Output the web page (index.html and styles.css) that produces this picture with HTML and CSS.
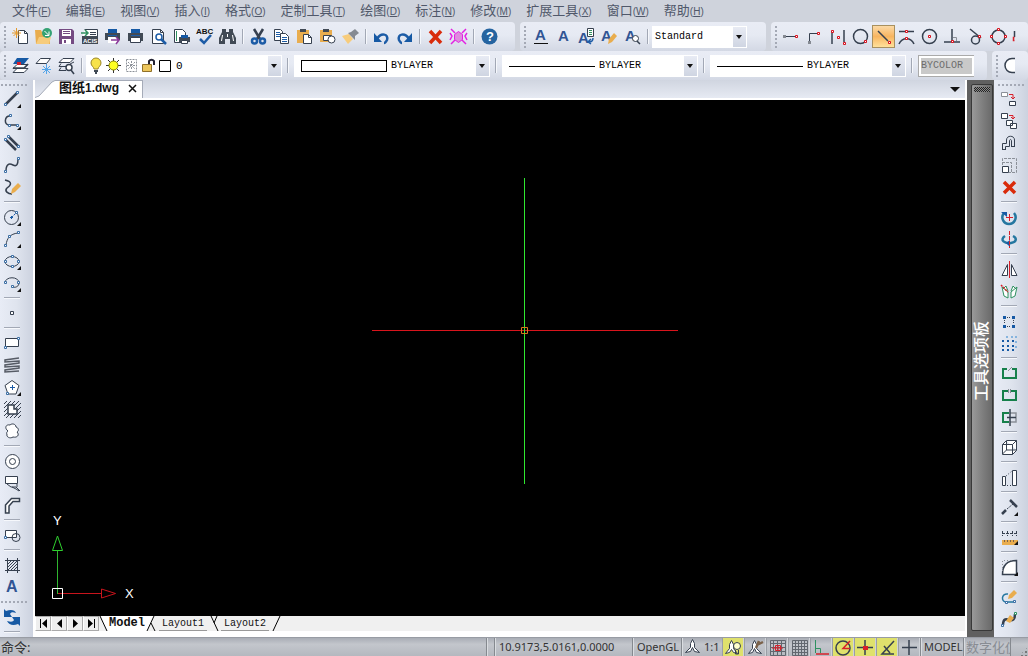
FILE: index.html
```html
<!DOCTYPE html>
<html lang="zh-CN">
<head>
  <meta charset="UTF-8">
  <meta name="viewport" content="width=device-width, initial-scale=1.0">
  <title>图纸1.dwg</title>
  <link rel="stylesheet" href="styles.css">
</head>
<body>
  <nav class="menubar">
    <button>文件<small>(<u>F</u>)</small></button>
    <button>编辑<small>(<u>E</u>)</small></button>
    <button>视图<small>(<u>V</u>)</small></button>
    <button>插入<small>(<u>I</u>)</small></button>
    <button>格式<small>(<u>O</u>)</small></button>
    <button>定制工具<small>(<u>T</u>)</small></button>
    <button>绘图<small>(<u>D</u>)</small></button>
    <button>标注<small>(<u>N</u>)</small></button>
    <button>修改<small>(<u>M</u>)</small></button>
    <button>扩展工具<small>(<u>X</u>)</small></button>
    <button>窗口<small>(<u>W</u>)</small></button>
    <button>帮助<small>(<u>H</u>)</small></button>
  </nav>

  <div class="toolrow">
    <div class="toolbar standard">
      <i class="grip"></i>
      <button class="tool" aria-label="新建"><svg viewBox="0 0 17 17"><path class="white" d="M6.500 2.500h6l3 3v10h-9z"/><path d="M12.500 2.500v3h3"/><path class="gold" d="M4.500 0v10M0 5h9M1.500 2l6 6M7.500 2l-6 6"/></svg></button>
      <button class="tool" aria-label="打开"><svg viewBox="0 0 17 17"><path class="f-gold" d="M0 2h6l1 2h8v12H1z"/><path class="f-light" d="M4 9h12l-2 7H1z"/><circle class="f-green" cx="12" cy="5" r="5"/><path class="stroke-white" d="M9.500 3l4 4M14 3.500v4h-4"/></svg></button>
      <button class="tool" aria-label="保存"><svg viewBox="0 0 17 17"><path class="f-purple" d="M1 1h13l2 2v13H1z"/><path class="f-white" d="M4 2h9v6H4zM4 11h9v5H4z"/><path class="f-purple" d="M5 3h7v1H5zM5 5h7v1H5zM6 12h2v3H6z"/></svg></button>
      <button class="tool" aria-label="ACIS"><svg viewBox="0 0 17 17"><path class="white" d="M3.500 1.500h13v14H1.500v-7"/><path class="f-dark" d="M1 8h16v8H1z"/><path class="green w" d="M0 5h6M4 2l3 3-3 3"/><path d="M9 4.500h6M9 6.500h6"/><text class="f-white" x="2" y="15" font-size="6">ACIS</text></svg></button>
      <button class="tool" aria-label="输出"><svg viewBox="0 0 17 17"><path class="f-blue" d="M4 1h9v5H4z"/><path class="f-dark" d="M1 5h15v7H1z"/><path class="f-white" d="M4 9h9v6H4z"/><path class="blue" d="M4 7.500h9"/><path class="purple w" d="M7 12h8M12 9l3 3-3 4"/></svg></button>
      <button class="tool" aria-label="打印"><svg viewBox="0 0 17 17"><path class="f-blue" d="M4 1h9v5H4z"/><path class="f-dark" d="M1 5h15v8H1z"/><path class="white" d="M3.500 9.500h10v5h-10z"/><path class="blue" d="M4 7.500h9"/></svg></button>
      <button class="tool" aria-label="打印预览"><svg viewBox="0 0 17 17"><path class="white" d="M2.500 1.500h8l3 3v11h-11z"/><path d="M10.500 1.500v3h3"/><circle class="blue w white-in" cx="9" cy="9" r="3"/><path class="blue thick" d="M11 11l5 5"/></svg></button>
      <button class="tool" aria-label="发布"><svg viewBox="0 0 17 17"><path class="white" d="M1.500 1.500h8l3 3v10h-11z"/><path class="green" d="M3.500 3v10"/><path class="f-dark" d="M6 9h11v5H6z"/><path class="f-blue" d="M8 7h7v3H8z"/><path class="white" d="M8.500 12.500h6v3h-6z"/></svg></button>
      <button class="tool" aria-label="拼写检查"><svg viewBox="0 0 17 17"><text class="f-black" x="0" y="6" font-size="8">ABC</text><path class="blue thick" d="M4 11l4 4 7-8"/></svg></button>
      <button class="tool" aria-label="查找"><svg viewBox="0 0 17 17"><path class="f-dark" d="M3 1h4v3h3V1h4v3l3 6v6h-6v-5H6v5H0v-6l3-6z"/><path class="stroke-white" d="M3.500 7l-1 6M8.500 6v3M13.500 7l1 6"/></svg></button>
      <i class="sep"></i>
      <button class="tool" aria-label="剪切"><svg viewBox="0 0 17 17"><path class="thick" d="M4 1l6 10M13 1L7 11"/><circle class="blue thick" cx="4.500" cy="13" r="2.500"/><circle class="blue thick" cx="12.500" cy="13" r="2.500"/></svg></button>
      <button class="tool" aria-label="复制"><svg viewBox="0 0 17 17"><path class="white" d="M1.500 1.500h6l2 2v9h-8z"/><path class="blue" d="M3 4.500h4M3 6.500h4M3 8.500h4"/><path class="white" d="M7.500 5.500h5l3 3v7h-8z"/><path class="blue" d="M9 9.500h5M9 11.500h5M9 13.500h5"/></svg></button>
      <button class="tool" aria-label="粘贴"><svg viewBox="0 0 17 17"><path class="f-gold" d="M1 2h12v13H1z"/><path class="f-dark" d="M4 1h6v3H4z"/><path class="white" d="M7.500 6.500h5l3 3v6h-8z"/><path d="M12.500 6.500v3h3"/></svg></button>
      <button class="tool" aria-label="粘贴为块"><svg viewBox="0 0 17 17"><path class="f-gold" d="M1 2h12v12H1z"/><path class="f-dark" d="M4 1h6v3H4z"/><path class="white" d="M4.500 7.500h8v5h-8z"/><circle class="white-in" cx="12.500" cy="11.500" r="3.500"/></svg></button>
      <button class="tool" aria-label="特性匹配"><svg viewBox="0 0 17 17"><path class="f-light" d="M0 8l7-2 4 5-5 5z"/><path class="f-grey" d="M6 5l3-1 4-3 4 4-4 3v4z"/></svg></button>
      <i class="sep"></i>
      <button class="tool" aria-label="撤销"><svg viewBox="0 0 17 17"><path class="blue thick" d="M4 11c4-7 12-5 10 1-1 2-2 3-3 3"/><path class="f-blue" d="M1 5v9h8z"/></svg></button>
      <button class="tool" aria-label="重做"><svg viewBox="0 0 17 17"><path class="blue thick" d="M13 11C9 4 1 6 3 12c1 2 2 3 3 3"/><path class="f-blue" d="M16 5v9H8z"/></svg></button>
      <i class="sep"></i>
      <button class="tool" aria-label="删除"><svg viewBox="0 0 17 17"><path class="cross" d="M3 3l11 12M14 3L3 15"/></svg></button>
      <button class="tool" aria-label="清理"><svg viewBox="0 0 17 17"><path class="magenta w" d="M1 1l4 4M16 1l-4 4M1 16l4-4M16 16l-4-4M0 5l2 3-2 4M17 5l-2 3 2 4"/><path class="magenta pink-in" d="M8.500 3.500l4 3v5l-4 3-4-3v-5z"/></svg></button>
      <i class="sep"></i>
      <button class="tool" aria-label="帮助"><svg viewBox="0 0 17 17"><circle class="f-help" cx="8.500" cy="8.500" r="8"/><text class="f-white" x="5" y="13" font-size="13">?</text></svg></button>
    </div>
    <div class="toolbar text-bar">
      <i class="grip"></i>
      <button class="tool" aria-label="多行文字"><svg viewBox="0 0 17 17"><text class="f-letter" x="3" y="12" font-size="15">A</text><path class="f-black" d="M2 15h14v1H2z"/></svg></button>
      <button class="tool" aria-label="单行文字"><svg viewBox="0 0 17 17"><text class="f-letter" x="3" y="13" font-size="15">A</text></svg></button>
      <button class="tool" aria-label="文字样式"><svg viewBox="0 0 17 17"><text class="f-letter" x="0" y="15" font-size="15">A</text><path class="white" d="M9.500.5h6v8h-6z"/><path class="green" d="M11 2.500h3M11 4.500h3M11 6.500h3"/><path class="blue w" d="M15 10c0 3-1 4-4 4M13 11l-3 3 3 2"/></svg></button>
      <button class="tool" aria-label="编辑文字"><svg viewBox="0 0 17 17"><text class="f-letter" x="0" y="13" font-size="15">A</text><path class="f-gold" d="M13 5l3 3-5 6-4 2 1-5z"/></svg></button>
      <button class="tool" aria-label="查找文字"><svg viewBox="0 0 17 17"><text class="f-letter" x="1" y="13" font-size="15">A</text><circle class="white" cx="11.500" cy="10.500" r="3"/><path class="w" d="M13 13l3 3"/></svg></button>
      <i class="sep"></i>
      <span class="combo style-combo"><select aria-label="文字样式"><option>Standard</option></select></span>
    </div>
    <div class="toolbar snap-bar">
      <i class="grip"></i>
      <button class="tool" aria-label="临时追踪"><svg viewBox="0 0 17 17"><path d="M3 8.500h9"/><path class="f-grey" d="M0 7h3v3H0z"/><path class="node-red" d="M12.500 7.500h2v2h-2z"/></svg></button>
      <button class="tool" aria-label="捕捉自"><svg viewBox="0 0 17 17"><path d="M3.500 13V5.500h8"/><path class="f-grey" d="M2 13h3v3H2z"/><path class="node-red" d="M11.500 4.500h2v2h-2z"/></svg></button>
      <button class="tool" aria-label="端点"><svg viewBox="0 0 17 17"><path class="w" d="M3 4v12M15 2v12"/><path class="node-red" d="M2.500 2.500h2v2h-2zM8.500 8.500h2v2h-2zM14.500 14.500h2v2h-2z"/></svg></button>
      <button class="tool" aria-label="插入点"><svg viewBox="0 0 17 17"><circle class="w" cx="8.500" cy="8.500" r="7"/><path class="node-red" d="M12.500 12.500h2v2h-2z"/></svg></button>
      <button class="tool active" aria-label="最近点"><svg viewBox="0 0 17 17"><path class="w" d="M3 3l10 10"/><path class="node-red" d="M13.500 13.500h2v2h-2z"/></svg></button>
      <button class="tool" aria-label="外观交点"><svg viewBox="0 0 17 17"><path class="w" d="M1 3.500h15M1 16c3-7 12-7 15 0"/><path class="node-red" d="M7.500 2.500h2v2h-2zM7.500 9.500h2v2h-2z"/></svg></button>
      <button class="tool" aria-label="圆心"><svg viewBox="0 0 17 17"><circle class="w" cx="8.500" cy="8.500" r="7"/><path class="node-red" d="M7.500 7.500h2v2h-2z"/></svg></button>
      <button class="tool" aria-label="垂足"><svg viewBox="0 0 17 17"><path class="w" d="M8 1v12M0 14h16"/><path class="grey" d="M9 9.500h3.500V13"/><path class="node-red" d="M7.500 12.500h2v2h-2z"/></svg></button>
      <button class="tool" aria-label="切点"><svg viewBox="0 0 17 17"><circle class="w" cx="8.500" cy="12" r="4"/><path class="w" d="M3 1l11 9"/><path class="node-red" d="M11.500 7.500h2v2h-2z"/></svg></button>
      <button class="tool" aria-label="象限点"><svg viewBox="0 0 17 17"><circle class="w" cx="8.500" cy="8.500" r="6.500"/><path class="node-red" d="M7.500.5h2v2h-2zM14.500 7.500h2v2h-2zM7.500 14.500h2v2h-2zM.5 7.500h2v2h-2z"/></svg></button>
      <button class="tool" aria-label="平行"><svg viewBox="0 0 17 17"><path class="w" d="M1.500 3v6"/><path class="red w" d="M1.500 9.500H.5v3h1"/></svg></button>
    </div>
  </div>

  <div class="toolrow">
    <div class="toolbar properties">
      <i class="grip"></i>
      <button class="tool" aria-label="图层"><svg viewBox="0 0 17 17"><path class="white" d="M5 11.500h11l-4 4H1z"/><path class="white" d="M5 7.500h11l-4 4H1z"/><path class="f-blue" d="M5 1h12l-5 6H1z"/><path class="w" d="M1 11h11l4-4"/><path class="f-red" d="M5 5h4v3H5z"/></svg></button>
      <button class="tool" aria-label="图层状态"><svg viewBox="0 0 17 17"><path class="white" d="M5.500 1.500h10l-4 5H1z"/><path class="sky" d="M11.500 7v10M7 12.500h9M8 9l7 7M15 9l-7 7"/></svg></button>
      <button class="tool" aria-label="图层浏览"><svg viewBox="0 0 17 17"><path class="white" d="M5 1.500h11l-4 4H1z"/><path d="M3 6.500l-2 3h8M3 10.500l-2 3h7M12 7l4-2"/><circle class="white w" cx="11" cy="10.500" r="3"/><path class="w" d="M13 13l3 4"/></svg></button>
      <i class="sep"></i>
      <span class="combo layer-combo">
        <select aria-label="当前图层"><option>0</option></select>
        <svg class="layer-state" viewBox="0 0 84 17"><path d="M6 12c0-2-3-3-3-6a5 5 0 0 1 10 0c0 3-3 4-3 6z" fill="#f7e24a" stroke="#9b8728"/><path class="f-dark" d="M6 13h4v2H6zM7 15h2v2H7z"/><path d="M25.500 1v15M18 8.500h15M20 3l11 11M31 3L20 14" stroke="#333"/><circle cx="25.500" cy="8.500" r="4.500" fill="#ff2" stroke="#8a8400"/><path class="grey" d="M38.500 2.500h10v12h-10zM43.500 4v9M39 8.500h9M40 5l7 7M47 5l-7 7" stroke-dasharray="2 1"/><path d="M61 8V4a3 3 0 0 1 5 0v4" stroke="#223" stroke-width="2"/><path d="M54.500 7.500h9v7h-9z" fill="#ecc65c" stroke="#907029"/><path d="M71.500 3.500h11v11h-11z" fill="#fff" stroke="#000"/></svg>
      </span>
      <i class="sep wide"></i>
      <span class="combo color-combo"><select aria-label="颜色"><option>BYLAYER</option></select><i class="swatch"></i></span>
      <i class="sep wide"></i>
      <span class="combo line-combo"><select aria-label="线型"><option>BYLAYER</option></select><i class="line"></i></span>
      <i class="sep wide"></i>
      <span class="combo line-combo"><select aria-label="线宽"><option>BYLAYER</option></select><i class="line"></i></span>
      <i class="sep wide"></i>
      <span class="combo plot-combo"><select aria-label="打印样式" disabled><option>BYCOLOR</option></select></span>
    </div>
    <div class="toolbar orbit-bar">
      <i class="grip"></i>
      <button class="tool" aria-label="动态观察"><svg viewBox="0 0 17 17"><path class="f-white" d="M11 1.500H8a7 7 0 0 0 0 14h3z"/><path class="w" d="M11 1.500H8a7 7 0 0 0 0 14h3"/></svg></button>
    </div>
  </div>

  <main class="workspace">
    <aside class="dock dock-left">
      <i class="grip-h"></i>
      <button class="tool" aria-label="直线"><svg viewBox="0 0 17 17"><path class="thick" d="M2 13L13 2"/><path class="node" d="M.5 12.500h2v2h-2zM12.500.5h2v2h-2z"/><path class="f-black" d="M17 13v4h-4z"/></svg></button>
      <button class="tool" aria-label="多段线"><svg viewBox="0 0 17 17"><path class="w" d="M6 3C0 3 0 12 5 12h8"/><path class="node" d="M5.500 1.500h2v2h-2zM4.500 11.500h2v2h-2zM12.500 11.500h2v2h-2z"/><path class="f-black" d="M17 13v4h-4z"/></svg></button>
      <button class="tool" aria-label="双线"><svg viewBox="0 0 17 17"><path class="thick" d="M5 2l10 10M2 5l10 10"/><path class="node" d="M3.500.5h2v2h-2zM13.500 10.500h2v2h-2zM.5 3.500h2v2h-2z"/></svg></button>
      <button class="tool" aria-label="样条曲线"><svg viewBox="0 0 17 17"><path class="w" d="M2 14c0-9 5-7 7-6 4 2 5-1 5-6"/><path class="node" d="M.5 13.500h2v2h-2zM13.500.5h2v2h-2z"/></svg></button>
      <button class="tool" aria-label="徒手画线"><svg viewBox="0 0 17 17"><path class="w" d="M1 1c8 2 6 5 2 8-3 3 1 6 5 6"/><path class="f-gold" d="M14 4l3 3-6 6-4 2 1-5z"/></svg></button>
      <i class="sep-h"></i>
      <button class="tool" aria-label="圆"><svg viewBox="0 0 17 17"><circle cx="7.500" cy="8.500" r="7"/><path class="blue" d="M7.500 8.500l5-5" stroke-dasharray="2 1"/><path class="f-blue" d="M6 8h3v1H6zM7 7h1v3H7z"/><path class="node" d="M11.500 2.500h2v2h-2z"/><path class="f-black" d="M17 13v4h-4z"/></svg></button>
      <button class="tool" aria-label="圆弧"><svg viewBox="0 0 17 17"><path d="M2 14C3 7 6 3 14 2"/><path class="node" d="M.5 13.500h2v2h-2zM4.500 4.500h2v2h-2zM13.500.5h2v2h-2z"/><path class="f-black" d="M17 13v4h-4z"/></svg></button>
      <button class="tool" aria-label="椭圆"><svg viewBox="0 0 17 17"><ellipse cx="8" cy="8.500" rx="7" ry="5"/><path class="node" d="M.5 7.500h2v2h-2zM7.500 2.500h2v2h-2zM13.500 7.500h2v2h-2zM7.500 12.500h2v2h-2z"/><path class="f-black" d="M17 13v4h-4z"/></svg></button>
      <button class="tool" aria-label="椭圆弧"><svg viewBox="0 0 17 17"><path d="M1 8c0-7 14-7 14 0 0 3-3 5-6 4"/><path class="node" d="M.5 6.500h2v2h-2zM13.500 6.500h2v2h-2zM7.500 10.500h2v2h-2z"/><path class="f-black" d="M17 13v4h-4z"/></svg></button>
      <i class="sep-h"></i>
      <button class="tool" aria-label="点"><svg viewBox="0 0 17 17"><path class="white" d="M6.500 6.500h3v3h-3z"/></svg></button>
      <i class="sep-h"></i>
      <button class="tool" aria-label="矩形"><svg viewBox="0 0 17 17"><path class="white" d="M1.500 3.500h13v8h-13z"/><path class="node" d="M.5 11.500h2v2h-2zM13.500 2.500h2v2h-2z"/></svg></button>
      <button class="tool" aria-label="螺旋"><svg viewBox="0 0 17 17"><path class="coil" d="M15 1L1 3v2l14-1v2L1 8v2l14-1v2L1 13v2l14-1"/></svg></button>
      <button class="tool" aria-label="多边形"><svg viewBox="0 0 17 17"><path class="white" d="M8 1.500l7 5-3 8.500H4L1 6.500z"/><path class="blue" d="M6 8.500h5M8.500 6v5"/><path class="node" d="M2.500 13.500h2v2h-2z"/><path class="f-black" d="M17 13v4h-4z"/></svg></button>
      <button class="tool" aria-label="边界"><svg viewBox="0 0 17 17"><path d="M0 3l3-3M0 7l7-7M0 11L11 0M0 15L15 0M2 17L17 2M6 17L17 6M10 17l7-7M14 17l3-3"/><path class="white w" d="M4 4h6v4h3v5H4z"/></svg></button>
      <button class="tool" aria-label="修订云线"><svg viewBox="0 0 17 17"><path class="white" d="M4 8C0 5 2 1 6 2c2-2 6-1 6 2 3 1 3 4 1 5 3 3 0 6-4 5-3 2-7 0-6-3-1-1 0-2 1-3z"/></svg></button>
      <i class="sep-h"></i>
      <button class="tool" aria-label="圆环"><svg viewBox="0 0 17 17"><circle class="white" cx="8.500" cy="8.500" r="7"/><circle cx="8.500" cy="8.500" r="3"/></svg></button>
      <button class="tool" aria-label="区域覆盖"><svg viewBox="0 0 17 17"><path class="white" d="M1.500 1.500h12v7h-12z"/><path d="M3 9l4 3h5l4 4M8 12l4 2 3 2M13 9v3"/></svg></button>
      <button class="tool" aria-label="多线"><svg viewBox="0 0 17 17"><path class="white w" d="M1.500 16V8l6-6.500h8v3H9L5 9v7z"/></svg></button>
      <i class="sep-h"></i>
      <button class="tool" aria-label="组合"><svg viewBox="0 0 17 17"><path class="white" d="M1.500 3.500h11v7h-11z"/><circle cx="12" cy="10.500" r="4"/><path class="node" d="M.5 9.500h2v2h-2z"/></svg></button>
      <i class="sep-h"></i>
      <button class="tool" aria-label="填充"><svg viewBox="0 0 17 17"><path d="M1 3.500h15M1 13.500h15M3.500 1v15M13.500 1v15M4 7l3-3M4 10l6-6M4 13l9-9M7 13l6-6M10 13l3-3"/></svg></button>
      <button class="tool" aria-label="文字"><svg viewBox="0 0 17 17"><text class="f-letter" x="2" y="13" font-size="16">A</text></svg></button>
      <i class="grip-h"></i>
      <button class="tool" aria-label="刷新"><svg viewBox="0 0 17 17"><path class="f-blue" d="M0 0l2 2c5-2 9-1 10 2-3-1-5-1-6 1l2 3H0zM8 8h8v9l-2-2c-5 2-9 1-11-3 4 1 6 1 7-1z"/></svg></button>
      <i class="sep-h"></i>
    </aside>

    <section class="document">
      <header class="file-tabs">
        <svg class="tab-slant" viewBox="0 0 20 18"><path d="M0 18L4 16 17 2l3-1.500V18z" fill="#fff" stroke="none"/><path d="M0 17.500L4 16 17 2l3-1.500" stroke="#a5abb8"/></svg>
        <div class="file-tab"><b><span>图纸</span>1.dwg</b><button class="close" aria-label="关闭"><svg viewBox="0 0 9 9"><path d="M1 1l7 7M8 1L1 8" stroke="#111" stroke-width="1.500"/></svg></button></div>
        <button class="tab-list" aria-label="文件列表"></button>
      </header>
      <div class="canvas">
        <svg class="crosshair" viewBox="0 0 307 307">
          <path d="M0 152.500h306" stroke="#d8141c"/>
          <path d="M152.500 0v306" stroke="#2fe82f"/>
          <path d="M149.500 149.500h6v6h-6z" stroke="#d8781c"/>
        </svg>
        <svg class="ucs" viewBox="0 0 84 86">
          <path d="M5.500 80V37" stroke="#2fb52f"/>
          <path d="M.5 36.500h10L5.500 22z" stroke="#2fd02f"/>
          <path d="M6 79.500h43M49.500 75v9l14-4.500z" stroke="#c8141c"/>
          <path d="M.5 74.500h10v10H.5z" stroke="#fff"/>
          <text x="1" y="11">Y</text>
          <text x="73" y="84">X</text>
        </svg>
      </div>
      <footer class="layout-tabs">
        <button class="nav" aria-label="第一个"><svg viewBox="0 0 9 9"><path d="M1 0h1v9H1zM8 0v9L3 4.500z"/></svg></button>
        <button class="nav" aria-label="上一个"><svg viewBox="0 0 9 9"><path d="M7 0v9L2 4.500z"/></svg></button>
        <button class="nav" aria-label="下一个"><svg viewBox="0 0 9 9"><path d="M2 0v9l5-4.500z"/></svg></button>
        <button class="nav" aria-label="最后一个"><svg viewBox="0 0 9 9"><path d="M1 0v9l5-4.500zM7 0h1v9H7z"/></svg></button>
        <svg class="edge" viewBox="0 0 10 15"><path class="fill" d="M1 0h9v15H8z"/><path d="M1 0l7 15"/></svg>
        <button class="layout current">Model</button>
        <svg class="edge both" viewBox="0 0 14 15"><path class="fill" d="M0 0h9L2 15H0z"/><path d="M9 0L2 15M6 7l4 8"/></svg>
        <button class="layout">Layout1</button>
        <svg class="edge both" viewBox="0 0 14 15"><path d="M4 0l7 15M10 0L7 7"/></svg>
        <button class="layout">Layout2</button>
        <svg class="edge both" viewBox="0 0 14 15"><path d="M11 0L4 15"/></svg>
      </footer>
    </section>

    <aside class="palette">
      <div class="palette-bar"><i class="palette-grip"></i><span>工具选项板</span></div>
    </aside>

    <aside class="dock dock-right">
      <i class="grip-h"></i>
      <button class="tool" aria-label="移动"><svg viewBox="0 0 17 17"><path class="grey white-in" d="M.5 1.500h6v4h-6z"/><path class="red" d="M8 3.500h4v4M10 6l2 2 2-2"/><path class="white" d="M8.500 10.500h6v4h-6z"/></svg></button>
      <button class="tool" aria-label="复制对象"><svg viewBox="0 0 17 17"><path class="white" d="M.5.500h6v5h-6z"/><path class="red" d="M8 2.500h4V6M10 4l2 2 2-2"/><path class="white" d="M5.500 7.500h6v5h-6zM9.500 10.500h6v5h-6z"/></svg></button>
      <button class="tool" aria-label="偏移"><svg viewBox="0 0 17 17"><path d="M1.500 14.500V8.500h4V5c0-5 8-5 8 0v6M4.500 14.500v-3h4V6c0-2 2-2 2 0v5M1 14.500h4M10 11.500h4"/></svg></button>
      <button class="tool" aria-label="缩放"><svg viewBox="0 0 17 17"><path class="grey" d="M1.500 8V1.500h14v14H8M1 5.500h9.500V16" stroke-dasharray="3 1"/><path class="white" d="M1.500 9.500h6v6h-6z"/></svg></button>
      <button class="tool" aria-label="删除对象"><svg viewBox="0 0 17 17"><path class="cross" d="M3 3l11 11M14 3L3 14"/></svg></button>
      <i class="sep-h"></i>
      <button class="tool" aria-label="旋转"><svg viewBox="0 0 17 17"><path class="teal thick" d="M3 4C-1 9 3 15 8 15s9-6 5-11"/><path class="f-blue" d="M0 3h6v5z"/><path class="red" d="M5 8.500h7M8.500 5v7"/></svg></button>
      <button class="tool" aria-label="三维旋转"><svg viewBox="0 0 17 17"><path class="teal thick" d="M4 5c-6 4 0 8 6 7 6-1 6-5 2-7"/><path class="f-blue" d="M9 9v7l-4-4z"/><path class="red" d="M8.500 0v17" stroke-dasharray="4 1"/></svg></button>
      <i class="sep-h"></i>
      <button class="tool" aria-label="镜像"><svg viewBox="0 0 17 17"><path class="white" d="M6.500 3.500v11H1zM10.500 3.500v11H16z"/><path class="red" d="M8.500 0v17"/></svg></button>
      <button class="tool" aria-label="三维镜像"><svg viewBox="0 0 17 17"><path class="green white-in" d="M1 4l2 9 4 2V9zM16 4l-2 9-4 2V9zM7 8l-2-5-3 3M10 8l2-5 3 3"/><path class="red w" d="M0 2l7 7" stroke-dasharray="2 1"/></svg></button>
      <i class="sep-h"></i>
      <button class="tool" aria-label="阵列"><svg viewBox="0 0 17 17"><path class="f-blue" d="M2 3h3v3H2zM11 3h3v3h-3zM2 12h3v3H2zM11 12h3v3h-3z"/><path d="M6 4.500h4M6 13.500h4M3.500 7v4M12.500 7v4" stroke-dasharray="1 1"/></svg></button>
      <button class="tool" aria-label="三维阵列"><svg viewBox="0 0 17 17"><path class="f-sky" d="M5 1h2v2H5zM10 1h2v2h-2zM14 1h2v2h-2zM14 6h2v2h-2zM14 11h2v2h-2z"/><path class="f-blue" d="M1 5h2v2H1zM6 5h2v2H6zM11 5h2v2h-2zM1 10h2v2H1zM6 10h2v2H6zM11 10h2v2h-2zM1 14h2v2H1zM6 14h2v2H6zM11 14h2v2h-2z"/></svg></button>
      <i class="sep-h"></i>
      <button class="tool" aria-label="打断"><svg viewBox="0 0 17 17"><path class="break" d="M6 4H2v9h13V4h-4"/><path class="grey" d="M7 6l4-4"/></svg></button>
      <button class="tool" aria-label="打断于点"><svg viewBox="0 0 17 17"><path class="break" d="M7 4H2v9h13V4h-5"/><path class="grey" d="M7.500 2v4M9.500 2v4"/></svg></button>
      <button class="tool" aria-label="修剪"><svg viewBox="0 0 17 17"><path class="break" d="M8 4H2v9h6"/><path class="grey w" d="M9 4h6v9H9"/><path class="w" d="M9 0v17M6 8.500h9"/></svg></button>
      <i class="sep-h"></i>
      <button class="tool" aria-label="三维拉伸"><svg viewBox="0 0 17 17"><path class="white" d="M1.500 5.500h10v10h-10zM1.500 5.500l4-4h10v10l-4 4M15.500 1.500l-4 4M5.500 2v9h10M5.500 11l-4 4"/></svg></button>
      <i class="sep-h"></i>
      <button class="tool" aria-label="拉长"><svg viewBox="0 0 17 17"><path class="white" d="M1.500 7.500h3v9h-3zM11.500 1.500h4v15h-4z"/><path d="M5 7l6-5M6 16.500h5" stroke-dasharray="1 2"/></svg></button>
      <i class="sep-h"></i>
      <button class="tool" aria-label="延伸"><svg viewBox="0 0 17 17"><path class="thick" d="M1 15l4-4M9 1l7 7"/><path d="M6 10l6-5" stroke-dasharray="2 1"/><path class="f-black" d="M17 13v4h-4z"/></svg></button>
      <i class="sep-h"></i>
      <button class="tool" aria-label="测量"><svg viewBox="0 0 17 17"><path d="M1 4.500h15M1.500 2v5M6.500 2v5M11.500 2v5M15.500 2v5" stroke-dasharray="3 1"/><path class="f-gold" d="M1 11h16v5H1z"/><path class="brown" d="M3.500 11v2M6.500 11v2M9.500 11v2M12.500 11v2"/><path class="f-black" d="M17 12v4h-4z"/></svg></button>
      <i class="sep-h"></i>
      <button class="tool" aria-label="圆角"><svg viewBox="0 0 17 17"><path class="white w" d="M1.500 15.500c0-9 5-14 14-14v14z"/><path class="grey" d="M1.500 12V1.500H12" stroke-dasharray="1 2"/><path class="f-black" d="M17 13v4h-4z"/></svg></button>
      <i class="sep-h"></i>
      <button class="tool" aria-label="编辑多段线"><svg viewBox="0 0 17 17"><path class="teal w" d="M7 5C0 4 0 13 5 13h9"/><path class="node" d="M4.500 12.500h2v2h-2zM12.500 11.500h2v2h-2z"/><path class="f-gold" d="M13 1l3 3-5 5-4 1 1-4z"/></svg></button>
      <button class="tool" aria-label="编辑样条"><svg viewBox="0 0 17 17"><path class="thick" d="M2 14c0-7 4-6 6-5 4 1 6-1 6-6"/><path class="f-gold" d="M9 4l4 3-4 5-4-2z"/><path class="node" d="M.5 13.500h2v2h-2z"/><path class="green white-in" d="M13.500 1.500h2v2h-2z"/></svg></button>
    </aside>
  </main>

  <footer class="statusbar">
    <label class="command">命令: <input type="text" aria-label="命令行"></label>
    <span class="cell gap"></span>
    <span class="cell coords">10.9173,5.0161,0.0000</span>
    <button class="cell opengl">OpenGL</button>
    <button class="cell scale"><svg viewBox="0 0 17 17"><path class="white" d="M8.500 1.500l2 4v4l5 5-5-1-2-4-2 4-5 1 5-5v-4z"/></svg>1:1</button>
    <button class="state on" aria-label="注释可见性"><svg viewBox="0 0 17 17"><path class="white" d="M6.500 1.500l2 4v4l4 5-4-1-2-3-2 3-4 1 4-5v-4z"/><circle cx="12" cy="7" r="3.500" fill="#ffc"/><path d="M10.500 11v4h3v-4"/></svg></button>
    <button class="state" aria-label="自动注释"><svg viewBox="0 0 17 17"><path class="white" d="M7.500 1.500l2 4v4l5 5-5-1-2-4-2 4-4 1 4-5v-4z"/><path class="brown thick" d="M9 9l3-7M10 6l6-3"/></svg></button>
    <button class="state" aria-label="捕捉"><svg viewBox="0 0 17 17"><path class="mesh" d="M1.500 1.500h15v15h-15zM1 4.500h15M1 8.500h15M1 12.500h15M4.500 1v15M8.500 1v15M12.500 1v15"/><path class="red" d="M6.500 6.500h5v5h-5zM3 9h11M9 7v4"/></svg></button>
    <button class="state" aria-label="栅格"><svg viewBox="0 0 17 17"><path class="mesh" d="M1.500 1.500h15v15h-15zM1 4.500h15M1 7.500h15M1 10.500h15M1 13.500h15M4.500 1v15M7.500 1v15M10.500 1v15M13.500 1v15"/></svg></button>
    <button class="state" aria-label="正交"><svg viewBox="0 0 17 17"><path class="green" d="M2.500 1v13M3 9.500h4.500V14"/><path class="red w" d="M3 15h13"/></svg></button>
    <button class="state on" aria-label="极轴"><svg viewBox="0 0 17 17"><circle class="w" cx="8" cy="9" r="7"/><path class="red w" d="M15 2L8 9.500h7"/></svg></button>
    <button class="state on" aria-label="对象捕捉"><svg viewBox="0 0 17 17"><path class="w" d="M8 1v15M0 8.500h16"/><path class="f-red" d="M6 7h5v4H6z"/></svg></button>
    <button class="state on" aria-label="对象追踪"><svg viewBox="0 0 17 17"><path class="w" d="M15 2L3 15h12M5 7l6 7"/></svg></button>
    <button class="state" aria-label="线宽显示"><svg viewBox="0 0 17 17"><path class="w" d="M8 1v15M1 8.500h15"/></svg></button>
    <button class="cell model">MODEL</button>
    <button class="cell tablet" disabled>数字化仪</button>
    <i class="resize"></i>
  </footer>
</body>
</html>
```

FILE: styles.css
```css
* {
  box-sizing: border-box;
}
html, body {
  height: 100%;
  margin: 0;
}
body {
  display: flex;
  flex-direction: column;
  overflow: hidden;
  background: #cfd3dc;
  color: #222;
  font-family: "Liberation Sans", "Noto Sans CJK SC", sans-serif;
  font-size: 12px;
}
button {
  margin: 0;
  padding: 0;
  border: 0;
  background: none;
  color: inherit;
  font: inherit;
}

/* menu */
.menubar {
  display: flex;
  flex: none;
  gap: 15px;
  height: 22px;
  padding-left: 12px;
  background: #cfd3dc;
}
.menubar button {
  color: #50586a;
  font-size: 13px;
  line-height: 20px;
  white-space: nowrap;
}
.menubar small {
  font-size: 10px;
}

/* horizontal toolbars */
.toolrow {
  display: flex;
  flex: none;
  gap: 5px;
  height: 29px;
  overflow: hidden;
}
.toolbar {
  display: flex;
  flex: none;
  align-items: center;
  padding-left: 4px;
  border-radius: 4px;
  background: linear-gradient(#e9ecf5, #e6eaf3 45%, #d3d8e4);
}
.standard {
  width: 515px;
}
.text-bar {
  width: 246px;
}
.properties {
  width: 987px;
}
.snap-bar, .orbit-bar {
  flex: 1 0 0;
  min-width: 0;
  overflow: hidden;
}
.grip {
  flex: none;
  width: 2px;
  height: 22px;
  margin-right: 3px;
  background: repeating-linear-gradient(#a4a9b5 0 2px, transparent 2px 4px);
}
.sep {
  flex: none;
  width: 2px;
  height: 15px;
  margin: 0 3px;
  border-left: 1px solid #a2a8b5;
  border-right: 1px solid #f6f8fc;
}
.sep.wide {
  margin: 0 5px;
}
.tool {
  flex: none;
  width: 23px;
  height: 23px;
  padding: 3px;
}
.tool.active {
  padding: 2px;
  border: 1px solid #a8905f;
  background: linear-gradient(#fbd9a6, #f8b560 50%, #ffe19a);
}
.tool svg, .state svg, .scale svg {
  display: block;
  width: 17px;
  height: 17px;
}

/* icon strokes and fills */
svg {
  overflow: visible;
  fill: none;
  stroke: #36404f;
}
svg text {
  font-family: "Liberation Sans", sans-serif;
  font-weight: bold;
}
.w { stroke-width: 1.5; }
.thick { stroke-width: 2.5; }
.white, .white-in { fill: #fff; }
.stroke-white { stroke: #fff; }
.pink-in { fill: #df8adf; }
.blue { stroke: #1d5ca6; }
.teal { stroke: #2577a0; }
.sky { stroke: #55a5e8; }
.red { stroke: #d8202a; }
.green { stroke: #2f9160; }
.gold { stroke: #e59a2c; }
.grey { stroke: #8b9098; }
.mesh { stroke: #62676f; }
.purple { stroke: #8c3b9b; }
.magenta { stroke: #e321e3; }
.brown { stroke: #7b624a; }
.coil { stroke: #575c66; stroke-width: 1.5; }
.cross { stroke: #d92b0b; stroke-width: 3.5; }
.break { stroke: #16804b; stroke-width: 2; }
.node { fill: #fff; stroke: #3b6ea5; }
.node-red { fill: #fff; stroke: #d8101c; }
.f-dark { fill: #414a55; stroke: none; }
.f-black { fill: #111; stroke: none; }
.f-white { fill: #fff; stroke: none; }
.f-blue { fill: #1659a4; stroke: none; }
.f-help { fill: #2564a0; stroke: none; }
.f-sky { fill: #86b4de; stroke: none; }
.f-letter { fill: #315594; stroke: none; }
.f-red { fill: #d8202a; stroke: none; }
.f-green { fill: #35a274; stroke: none; }
.f-gold { fill: #e9ad4e; stroke: none; }
.f-light { fill: #f7cc7c; stroke: none; }
.f-grey { fill: #858a92; stroke: none; }
.f-purple { fill: #744a82; stroke: none; }

/* drop-downs */
.combo {
  position: relative;
  flex: none;
  width: 196px;
  height: 22px;
}
.combo select {
  width: 100%;
  height: 100%;
  padding: 0 16px 0 3px;
  border: 0;
  border-radius: 0;
  background: #fff;
  color: #000;
  font-family: "Liberation Mono", monospace;
  font-size: 10px;
  appearance: none;
}
.combo::before {
  content: "";
  position: absolute;
  top: 1px;
  right: 1px;
  width: 13px;
  height: 20px;
  background: linear-gradient(#e8ebf4, #cfd5e2);
  pointer-events: none;
}
.combo::after {
  content: "";
  position: absolute;
  top: 9px;
  right: 5px;
  border: 3px solid transparent;
  border-top: 4px solid #111;
  border-bottom: 0;
  pointer-events: none;
}
.style-combo {
  width: 95px;
}
.layer-combo select {
  padding-left: 90px;
  font-size: 11px;
}
.layer-state {
  position: absolute;
  top: 2px;
  left: 2px;
  width: 84px;
  height: 17px;
  pointer-events: none;
}
.color-combo select, .line-combo select {
  padding-left: 97px;
}
.swatch {
  position: absolute;
  top: 5px;
  left: 7px;
  width: 86px;
  height: 12px;
  border: 1px solid #000;
  pointer-events: none;
}
.line {
  position: absolute;
  top: 11px;
  left: 7px;
  width: 86px;
  height: 1px;
  background: #000;
  pointer-events: none;
}
.plot-combo {
  width: 56px;
  padding: 2px;
  border: 1px solid #aaa;
  border-right: 0;
  background: #fff;
}
.plot-combo select {
  display: block;
  padding: 0;
  background: #c9c9c9;
  color: #6d6d6d;
  opacity: 1;
}
.plot-combo::before, .plot-combo::after {
  display: none;
}

/* side docks */
.workspace {
  display: flex;
  flex: 1;
  min-height: 0;
}
.dock {
  display: flex;
  flex: none;
  flex-direction: column;
  overflow: hidden;
  background: linear-gradient(90deg, #e8ecf6, #dfe4ee 50%, #ccd2df);
}
.dock-left {
  width: 33px;
  padding-left: 1px;
}
.dock-right {
  width: 34px;
  padding-left: 4px;
}
.dock .tool {
  height: 22px;
  padding: 3px 3px 2px;
}
.grip-h {
  flex: none;
  width: 26px;
  height: 2px;
  margin: 3px 0;
  background: repeating-linear-gradient(90deg, #a4a9b5 0 2px, transparent 2px 4px);
}
.dock .grip-h:first-child {
  margin-top: 4px;
  margin-bottom: 2px;
}
.sep-h {
  flex: none;
  width: 16px;
  height: 2px;
  margin: 3px;
  border-top: 1px solid #a2a8b5;
  border-bottom: 1px solid #f6f8fc;
}

/* drawing window */
.document {
  display: flex;
  flex: 1;
  flex-direction: column;
  min-width: 0;
  border: solid #fff;
  border-width: 0 2px 6px;
}
.file-tabs {
  display: flex;
  flex: none;
  align-items: flex-end;
  height: 20px;
  border-bottom: 2px solid #fff;
  background: linear-gradient(#d0d5e0, #e6eaf3);
}
.tab-slant {
  width: 20px;
  height: 18px;
}
.file-tab {
  display: flex;
  align-items: center;
  gap: 9px;
  height: 18px;
  padding: 0 5px 3px 4px;
  border-top: 1px solid #a5abb8;
  border-right: 1px solid #a5abb8;
  background: #fff;
  color: #111;
  line-height: 14px;
}
.file-tab span {
  font-size: 13px;
}
.close svg {
  display: block;
  width: 9px;
  height: 9px;
}
.tab-list {
  width: 10px;
  height: 5px;
  margin: 0 5px 6px auto;
  background: #111;
  clip-path: polygon(0 0, 100% 0, 50% 100%);
}
.canvas {
  position: relative;
  flex: 1;
  overflow: hidden;
  background: #000;
}
.crosshair {
  position: absolute;
  top: 78px;
  left: 337px;
  width: 307px;
  height: 307px;
}
.ucs {
  position: absolute;
  bottom: 16px;
  left: 17px;
  width: 84px;
  height: 86px;
}
.ucs text {
  fill: #fff;
  stroke: none;
  font-size: 13px;
  font-weight: normal;
}
.layout-tabs {
  display: flex;
  flex: none;
  height: 15px;
  background: #f0f0f0;
}
.nav {
  width: 16px;
  height: 15px;
  border: 1px solid #aaa;
  border-left-color: #fff;
  background: #eee;
}
.nav svg {
  display: block;
  width: 9px;
  height: 9px;
  margin: 0 auto;
  fill: #000;
  stroke: none;
}
.edge {
  width: 10px;
  height: 15px;
  stroke: #000;
}
.edge.both {
  width: 14px;
}
.edge .fill {
  fill: #fff;
  stroke: none;
}
.layout {
  padding: 0 3px;
  border-bottom: 1px solid #999;
  color: #111;
  font-family: "Liberation Mono", monospace;
  font-size: 10px;
}
.layout.current {
  padding: 0;
  border-color: #fff;
  background: #fff;
  font-size: 12px;
  font-weight: bold;
}

/* tool palette title strip */
.palette {
  display: flex;
  flex: none;
  width: 27px;
  padding: 4px 1px 6px 4px;
  background: #606060;
}
.palette-bar {
  display: flex;
  flex: 1;
  flex-direction: column;
  align-items: center;
  border: 1px solid #383838;
  border-radius: 2px;
  background: linear-gradient(90deg, #999, #808080 50%, #696969);
}
.palette-grip {
  width: 16px;
  height: 5px;
  margin-top: 2px;
  background: repeating-conic-gradient(#222 0 25%, #888 0 50%) 0 0 / 2px 2px;
}
.palette-bar span {
  margin: auto auto auto 0;
  color: #fff;
  font-family: "Noto Sans CJK SC", sans-serif;
  font-size: 16px;
  font-weight: 500;
  line-height: 16px;
  writing-mode: vertical-rl;
  text-orientation: sideways;
  transform: rotate(180deg);
}

/* status bar */
.statusbar {
  display: flex;
  flex: none;
  height: 19px;
  border-top: 1px solid #989ca4;
  background: linear-gradient(#a9adb5, #c3c6cc 35%, #b4b8bf);
  color: #333;
  font-family: "Noto Sans", "Noto Sans CJK SC", sans-serif;
  font-size: 11px;
  line-height: 18px;
}
.command {
  display: flex;
  flex: 1;
  gap: 4px;
  min-width: 0;
  padding-left: 1px;
  font-size: 13px;
}
.command input {
  flex: 1;
  min-width: 0;
  padding: 0;
  border: 0;
  background: none;
  font: inherit;
}
.cell {
  flex: none;
  border-left: 1px solid #85898f;
  box-shadow: inset 1px 0 #dadde1;
  overflow: hidden;
  text-align: left;
  white-space: nowrap;
}
.gap { width: 8px; }
.coords { width: 138px; padding-left: 4px; }
.opengl { width: 49px; padding-left: 4px; }
.scale {
  display: flex;
  gap: 3px;
  width: 41px;
  padding-left: 2px;
}
.model { width: 43px; padding-left: 3px; }
.tablet {
  width: 48px;
  padding-left: 2px;
  border-right: 1px solid #85898f;
  color: #888c93;
  font-size: 13px;
}
.state {
  flex: none;
  width: 22px;
  padding: 0 2px;
  border-left: 1px solid #9a9ea5;
  border-right: 1px solid #d0d3d8;
}
.state.on {
  background: #dfe16c;
}
.resize {
  flex: none;
  align-self: flex-end;
  width: 9px;
  height: 9px;
  margin: 0 0 0 8px;
  background: repeating-conic-gradient(#777 0 25%, transparent 0 100%) 0 0 / 4px 4px;
  clip-path: polygon(100% 0, 100% 100%, 0 100%);
}
```
